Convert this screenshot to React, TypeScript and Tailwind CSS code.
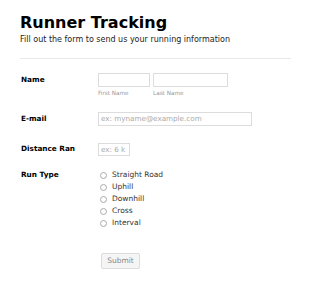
import React from "react";

const font = { fontFamily: '"DejaVu Sans", Verdana, sans-serif' };

export default function App() {
  const types = ["Straight Road", "Uphill", "Downhill", "Cross", "Interval"];
  return (
    <div className="w-[310px] h-[281px] bg-white overflow-hidden relative" style={font}>
      <div className="pl-[20px] pr-[19px] pt-[15px]">
        <h1 className="text-[16px] font-bold leading-[16px] text-black">Runner Tracking</h1>
        <p className="text-[8px] leading-[10px] text-[#222] mt-[4px]">Fill out the form to send us your running information</p>
        <div className="mt-[13px] h-px bg-[#e8e8e8]" />
      </div>

      <div className="pl-[21px]">
        {/* Name */}
        <div className="flex mt-[14px]">
          <div className="w-[77px] pt-[2px] text-[7.3px] font-bold leading-[10px] text-black">Name</div>
          <div className="flex gap-[3px]">
            <div className="flex flex-col">
              <div className="w-[52px] h-[14px] border border-[#dcdcdc] bg-white" />
              <div className="text-[5.7px] leading-[7px] text-[#999] mt-[3px]">First Name</div>
            </div>
            <div className="flex flex-col">
              <div className="w-[75px] h-[14px] border border-[#dcdcdc] bg-white" />
              <div className="text-[5.7px] leading-[7px] text-[#999] mt-[3px]">Last Name</div>
            </div>
          </div>
        </div>

        {/* Email */}
        <div className="flex mt-[15px]">
          <div className="w-[77px] pt-[2px] text-[7.3px] font-bold leading-[10px] text-black">E-mail</div>
          <div className="w-[154px] h-[14px] border border-[#dcdcdc] bg-white text-[7.2px] leading-[12px] text-[#aaa] pl-[2px] overflow-hidden whitespace-nowrap">ex: myname@example.com</div>
        </div>

        {/* Distance */}
        <div className="flex mt-[17px]">
          <div className="w-[77px] pt-[1px] text-[7.3px] font-bold leading-[10px] text-black">Distance Ran</div>
          <div className="w-[32px] h-[13px] border border-[#dcdcdc] bg-white text-[7.2px] leading-[11px] text-[#aaa] pl-[2px] overflow-hidden whitespace-nowrap">ex: 6 k</div>
        </div>

        {/* Run type */}
        <div className="flex mt-[13px]">
          <div className="w-[77px] pt-[1px] text-[7.3px] font-bold leading-[10px] text-black">Run Type</div>
          <div className="flex flex-col pl-[2px]">
            {types.map((t) => (
              <div key={t} className="flex items-center h-[12px]">
                <span className="w-[7px] h-[7px] rounded-full border border-[#aaa] bg-white" />
                <span className="ml-[5px] text-[7.5px] leading-[10px] text-[#333]">{t}</span>
              </div>
            ))}
          </div>
        </div>

        {/* Submit */}
        <div className="flex mt-[24px]">
          <div className="w-[80px]" />
          <div className="w-[39px] h-[16px] border border-[#dcdcdc] bg-[#f5f5f5] rounded-[2px] flex items-center justify-center text-[7.5px] text-[#888]">Submit</div>
        </div>
      </div>
    </div>
  );
}
